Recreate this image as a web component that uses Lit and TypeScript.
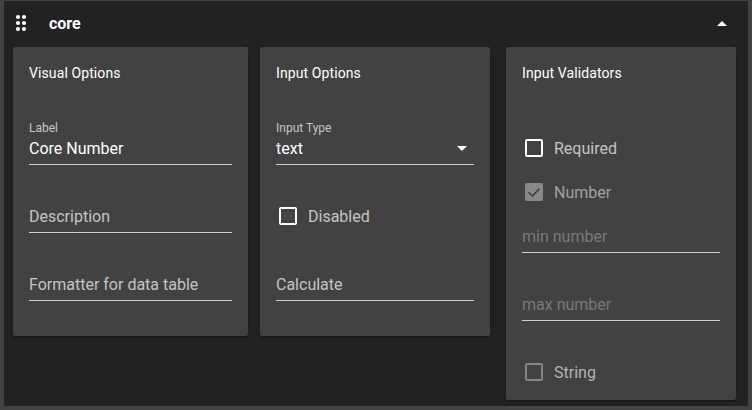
import { LitElement, html, css, svg } from "lit";
import { customElement } from "lit/decorators.js";

const field = (text: string, cls: string, label = "", arrow = false) => html`
  <div class="field ${cls}">
    ${label ? html`<div class="label">${label}</div>` : ""}
    <div class="line"><span class="${label ? "value" : "ph"}">${text}</span>
      ${arrow ? html`<span class="drop"></span>` : ""}</div>
  </div>`;

const check = (text: string, state: string, checked = false) => html`
  <div class="check ${state}">
    <span class="box">${checked
      ? html`<svg viewBox="0 0 18 18" width="18" height="18">${svg`<path d="M3.6 9.2l3.8 3.8 7-7.4" fill="none" stroke="#424242" stroke-width="1.6"/>`}</svg>`
      : ""}</span>
    <span class="ctext">${text}</span>
  </div>`;

@customElement("app-root")
export class AppRoot extends LitElement {
  static styles = css`
    :host { display: block; width: 752px; height: 410px; background: #424242; overflow: hidden;
      font-family: Roboto, "Liberation Sans", sans-serif; color: #fff; padding: 1px 4px 4px; box-sizing: border-box; }
    .panel { height: 405px; background: #222222; display: flex; flex-direction: column; }
    .head { height: 46px; flex: none; display: flex; align-items: center; padding: 0 16px 0 5px; box-sizing: border-box; }
    .head svg { display: block; margin-bottom: 2px; }
    .title { margin-left: 16px; font-size: 16px; font-weight: 700; line-height: 20px; flex: 1; }
    .up { width: 0; height: 0; border-left: 5px solid transparent; border-right: 5px solid transparent; border-bottom: 5px solid #fff; margin-right: 5px; margin-bottom: 1px; }
    .cards { display: flex; align-items: flex-start; padding-left: 9px; }
    .card { background: #424242; border-radius: 2px; padding: 16px; box-sizing: border-box; width: 230px;
      box-shadow: 0 2px 1px -1px rgba(0,0,0,.2), 0 1px 1px 0 rgba(0,0,0,.14), 0 1px 3px 0 rgba(0,0,0,.12); }
    .c1 { width: 235px; height: 289px; margin-right: 12px; }
    .c2 { height: 289px; margin-right: 16px; }
    .c3 { height: 353px; }
    .ctitle { font-size: 14px; font-weight: 400; letter-spacing: .1px; line-height: 20px; height: 34px; }
    .field { display: flex; flex-direction: column; justify-content: flex-end; box-sizing: border-box; }
    .h68 { height: 68px; }
    .h63 { height: 63px; }
    .h39 { height: 39px; }
    .label { font-size: 12px; line-height: 16px; color: rgba(255,255,255,.7); }
    .line { height: 29px; padding-top: 1px; padding-bottom: 3px; box-sizing: border-box; border-bottom: 1px solid #d0d0d0; display: flex; align-items: center; justify-content: space-between; font-size: 16px; line-height: 24px; }
    .value { color: #fff; }
    .ph { color: rgba(255,255,255,.7); }
    .dim .ph { color: rgba(255,255,255,.3); }
    .drop { width: 0; height: 0; border-left: 5px solid transparent; border-right: 5px solid transparent; border-top: 5px solid #fff; margin-right: 7px; margin-bottom: 1px; }
    .check { height: 44px; display: flex; align-items: center; padding-left: 3px; font-size: 16px; }
    .box { width: 18px; height: 18px; box-sizing: border-box; border: 2px solid #fff; border-radius: 2px; margin-right: 11px; display: block; position: relative; }
    .box svg { position: absolute; left: -2px; top: -2px; }
    .ctext { color: rgba(255,255,255,.7); }
    .check.off .box { border-color: rgba(255,255,255,.35); }
    .check.off .ctext { color: rgba(255,255,255,.6); }
    .check.on .box { background: rgba(255,255,255,.38); border-color: transparent; }
    .check.on .ctext { color: rgba(255,255,255,.5); }
    .gap { height: 29px; }
  `;

  render() {
    return html`
      <div class="panel">
        <div class="head">
          <svg width="24" height="24" viewBox="0 0 24 24" fill="#fff">
            <circle cx="9" cy="6" r="2.1"/><circle cx="15" cy="6" r="2.1"/>
            <circle cx="9" cy="12" r="2.1"/><circle cx="15" cy="12" r="2.1"/>
            <circle cx="9" cy="18" r="2.1"/><circle cx="15" cy="18" r="2.1"/>
          </svg>
          <div class="title">core</div>
          <div class="up"></div>
        </div>
        <div class="cards">
          <div class="card c1">
            <div class="ctitle">Visual Options</div>
            ${field("Core Number", "h68", "Label")}
            ${field("Description", "h68")}
            ${field("Formatter for data table", "h68")}
          </div>
          <div class="card c2">
            <div class="ctitle">Input Options</div>
            ${field("text", "h68", "Input Type", true)}
            <div class="gap"></div>
            ${check("Disabled", "")}
            ${field("Calculate", "h63")}
          </div>
          <div class="card c3">
            <div class="ctitle">Input Validators</div>
            <div class="gap"></div>
            ${check("Required", "")}
            ${check("Number", "on", true)}
            ${field("min number", "h39 dim")}
            ${field("max number", "h68 dim")}
            <div class="gap"></div>
            ${check("String", "off")}
          </div>
        </div>
      </div>`;
  }
}
